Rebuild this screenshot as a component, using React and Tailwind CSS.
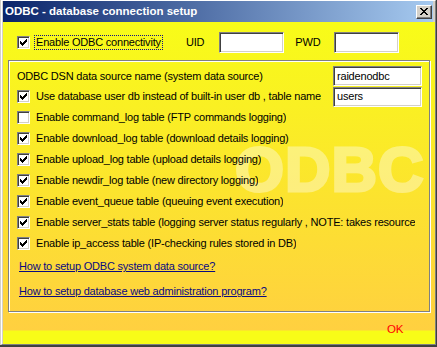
import React from "react";

function Check({ checked }) {
  return (
    <div className="relative w-[13px] h-[13px] shrink-0 bg-white border border-t-[#808080] border-l-[#808080] border-b-white border-r-white shadow-[inset_1px_1px_0_#404040,inset_-1px_-1px_0_#d4d0c8]">
      {checked && (
        <svg className="absolute left-[2px] top-[2px]" width="7" height="7" viewBox="0 0 7 7">
          <path d="M0 2L2 4L7 -1V2L2 7L0 5Z" fill="#000" shapeRendering="crispEdges" />
        </svg>
      )}
    </div>
  );
}

function Field({ className, value }) {
  return (
    <div
      className={
        "shrink-0 bg-white border border-t-[#808080] border-l-[#808080] border-b-white border-r-white shadow-[inset_1px_1px_0_#404040,inset_-1px_-1px_0_#d4d0c8] pl-[3px] flex items-center text-black " +
        className
      }
    >
      {value}
    </div>
  );
}

const rows = [
  { checked: true, text: "Use database user db instead of built-in user db , table name", field: "users" },
  { checked: false, text: "Enable command_log table (FTP commands logging)" },
  { checked: true, text: "Enable download_log table (download details logging)" },
  { checked: true, text: "Enable upload_log table (upload details logging)" },
  { checked: true, text: "Enable newdir_log table (new directory logging)" },
  { checked: true, text: "Enable event_queue table (queuing event execution)" },
  { checked: true, text: "Enable server_stats table (logging server status regularly , NOTE: takes resource" },
  { checked: true, text: "Enable ip_access table (IP-checking rules stored in DB)" },
];

export default function App() {
  return (
    <div className="w-[437px] h-[347px] bg-[#d4d0c8] border-r border-b-2 border-[#404040] flex [font-family:'Liberation_Sans',Arial,sans-serif] text-[11px] tracking-[-0.2px] text-black overflow-hidden">
      <div className="flex-1 min-w-0 ml-[1px] border-l border-t border-l-white border-t-white border-r border-b border-r-[#808080] border-b-[#808080] pl-[1px] flex flex-col">
        {/* title bar */}
        <div className="h-[21px] mr-[2px] shrink-0 flex items-center pl-[2px] pr-[1px] bg-[linear-gradient(to_right,#0a246a,#a6caf0)]">
          <span className="text-white font-bold text-[11.5px] tracking-normal whitespace-nowrap">
            ODBC - database connection setup
          </span>
          <div className="ml-auto w-[16px] h-[14px] bg-[#d4d0c8] border border-t-white border-l-white border-r-[#404040] border-b-[#404040] shadow-[inset_-1px_-1px_0_#808080] flex items-center justify-center">
            <svg width="8" height="7" viewBox="0 0 8 7" shapeRendering="crispEdges" className="mb-[1px]">
              <path d="M0 0h2v1h-2zM6 0h2v1h-2zM1 1h2v1h-2zM5 1h2v1h-2zM2 2h4v1h-4zM3 3h2v1h-2zM2 4h4v1h-4zM1 5h2v1h-2zM5 5h2v1h-2zM0 6h2v1h-2zM6 6h2v1h-2z" fill="#000" />
            </svg>
          </div>
        </div>

        {/* client */}
        <div className="flex-1 flex flex-col bg-[linear-gradient(180deg,#f8fc18_0px,#ffd040_308px,#f8fc18_309px)]">
          {/* top row */}
          <div className="mt-[10px] h-[21px] flex items-center pl-[14px]">
            <Check checked />
            <div className="ml-[4px] h-[15px] border border-dotted border-[#10108a] pl-[1px] pr-[1px] flex items-center whitespace-nowrap w-[129px]">
              Enable ODBC connectivity
            </div>
            <span className="ml-[23px]">UID</span>
            <Field className="ml-[15px] w-[65px] h-[21px]" value="" />
            <span className="ml-[11px]">PWD</span>
            <Field className="ml-[14px] w-[65px] h-[21px]" value="" />
          </div>

          {/* group panel */}
          <div className="relative ml-[5px] mt-[7px] w-[422px] h-[252px] shrink-0 border border-[#808080] shadow-[inset_1px_1px_0_#fff,1px_1px_0_#fff] overflow-hidden pt-[4px] pl-[8px] pr-[7px]">
            <div className="absolute left-[226px] top-[77px] text-[63px] leading-none font-bold tracking-[1px] text-white [-webkit-text-stroke:3px_white] opacity-[0.38] whitespace-nowrap pointer-events-none select-none">
              ODBC
            </div>
            <div className="relative">
              <div className="h-[21px] flex items-center pt-[1px]">
                <span className="whitespace-nowrap">ODBC DSN data source name (system data source)</span>
                <Field className="ml-auto w-[89px] h-[20px]" value="raidenodbc" />
              </div>
              {rows.map((r, i) => (
                <div key={i} className="h-[21px] flex items-center">
                  <Check checked={r.checked} />
                  <span className="ml-[6px] whitespace-nowrap overflow-hidden">{r.text}</span>
                  {r.field && <Field className="ml-auto w-[89px] h-[20px]" value={r.field} />}
                </div>
              ))}
              <div className="h-[25px] flex items-center pl-[2px]">
                <span className="text-[#0a0a80] underline underline-offset-[1px] whitespace-nowrap">
                  How to setup ODBC system data source?
                </span>
              </div>
              <div className="h-[25px] flex items-center pl-[2px]">
                <span className="text-[#0a0a80] underline underline-offset-[1px] whitespace-nowrap">
                  How to setup database web administration program?
                </span>
              </div>
            </div>
          </div>

          {/* OK */}
          <div className="mt-[11px] h-[14px] flex items-center pl-[384px]">
            <span className="text-[#ff0000] text-[11.5px] tracking-[-0.3px]">OK</span>
          </div>
        </div>
      </div>
    </div>
  );
}
